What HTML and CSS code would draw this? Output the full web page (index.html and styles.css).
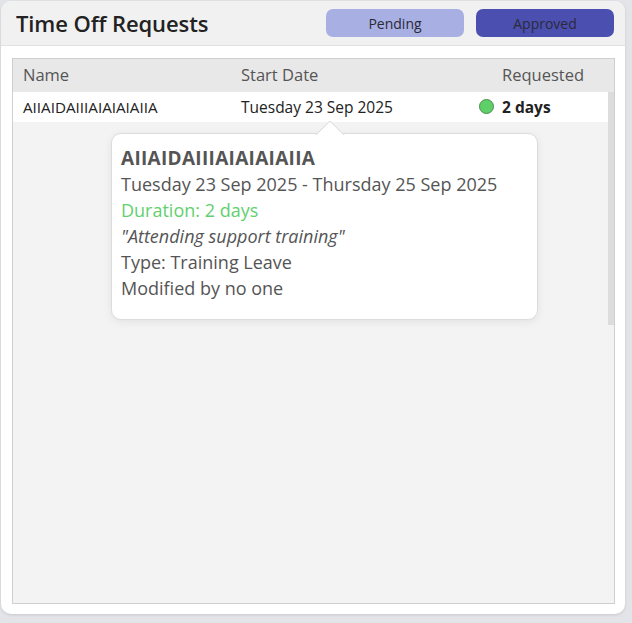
FILE: index.html
```html
<!DOCTYPE html>
<html>
<head>
<meta charset="utf-8">
<link rel="stylesheet" href="styles.css">
</head>
<body>
<div class="card">
  <div class="header">
    <h1 class="title">Time Off Requests</h1>
    <div class="filters">
      <button class="btn btn-pending">Pending</button>
      <button class="btn btn-approved">Approved</button>
    </div>
  </div>
  <div class="table">
    <div class="thead">
      <div class="col col-name">Name</div>
      <div class="col col-start">Start Date</div>
      <div class="col col-req">Requested</div>
    </div>
    <div class="tbody">
      <div class="rows">
        <div class="row">
          <div class="col col-name">AIIAIDAIIIAIAIAIAIIA</div>
          <div class="col col-start">Tuesday 23 Sep 2025</div>
          <div class="col col-req"><span class="dot"></span><b>2 days</b></div>
        </div>
      </div>
      <div class="scroll"><div class="thumb"></div></div>
    </div>
    <div class="tooltip">
      <div class="arrow"></div>
      <div class="tt-name">AIIAIDAIIIAIAIAIAIIA</div>
      <div class="tt-line">Tuesday 23 Sep 2025 - Thursday 25 Sep 2025</div>
      <div class="tt-line tt-green">Duration: 2 days</div>
      <div class="tt-line tt-italic">"Attending support training"</div>
      <div class="tt-line">Type: Training Leave</div>
      <div class="tt-line">Modified by no one</div>
    </div>
  </div>
</div>
</body>
</html>
```

FILE: styles.css
```css
* { box-sizing: border-box; }
html, body { margin: 0; padding: 0; }
body {
  background: #e3e4e8;
  font-family: "Open Sans", "Noto Sans", sans-serif;
  width: 632px;
  height: 623px;
  overflow: hidden;
}
.card {
  margin: 1px 0 0 1px;
  width: 624px;
  height: 613px;
  background: #fff;
  border-radius: 10px;
  box-shadow: 0 1px 3px rgba(0,0,0,0.12);
  display: flex;
  flex-direction: column;
}
.header {
  height: 45px;
  background: #f1f1f1;
  border-bottom: 1px solid #e2e2e2;
  border-radius: 10px 10px 0 0;
  display: flex;
  align-items: center;
  justify-content: space-between;
  padding: 0 11px 1px 15px;
}
.title {
  margin: 0;
  font-size: 22px;
  font-weight: 600;
  color: #222;
  letter-spacing: -0.1px;
}
.filters { display: flex; gap: 12px; }
.btn {
  width: 138px;
  height: 28px;
  border: none;
  border-radius: 7px;
  font-family: inherit;
  font-size: 14px;
  color: #2a2a3a;
  padding: 2px 0 0 0;
}
.btn-pending { background: #a8afe2; }
.btn-approved { background: #4a4fb0; }
.table {
  position: relative;
  margin: 12px 10px 0 11px;
  height: 546px;
  border: 1px solid #cfcfcf;
  background: #f3f3f3;
  display: flex;
  flex-direction: column;
}
.thead {
  height: 33px;
  background: #e8e8e8;
  display: flex;
  align-items: center;
  font-size: 16.5px;
  color: #555;
  padding-bottom: 2px;
}
.col-name { width: 218px; padding-left: 10px; }
.col-start { width: 261px; padding-left: 10px; }
.col-req { padding-left: 10px; display: flex; align-items: center; }
.tbody { display: flex; flex: 1; }
.rows { flex: 1; }
.row {
  height: 30px;
  background: #fff;
  display: flex;
  align-items: center;
  font-size: 15.2px;
  color: #222;
  padding-bottom: 1px;
}
.row .col-start { font-size: 15.5px; }
.row .col-req { margin-left: -23px; }
.row b { font-weight: 700; font-size: 15.5px; }
.dot {
  width: 15px;
  height: 15px;
  border-radius: 50%;
  background: #5fcf68;
  border: 1.5px solid #4d8a52;
  margin-right: 8px;
}
.scroll { width: 6px; }
.thumb { height: 233px; background: #dcdcdc; }
.tooltip {
  position: absolute;
  left: 98px;
  top: 74px;
  width: 427px;
  height: 187px;
  background: #fff;
  border: 1px solid #dcdcdc;
  border-radius: 10px;
  box-shadow: 0 2px 8px rgba(0,0,0,0.07);
  padding: 11px 9px;
  color: #555;
}
.arrow {
  position: absolute;
  left: 199px;
  top: -13px;
  width: 38px;
  height: 14px;
  overflow: hidden;
}
.arrow::before {
  content: "";
  position: absolute;
  left: 5px;
  top: 5px;
  width: 26px;
  height: 26px;
  background: #fff;
  border: 1px solid #dcdcdc;
  transform: rotate(45deg);
}
.tt-name {
  font-size: 19px;
  font-weight: 700;
  line-height: 26px;
  letter-spacing: 0.3px;
}
.tt-line {
  font-size: 18px;
  line-height: 26px;
}
.tt-green { color: #62d06e; }
.tt-italic { font-style: italic; }
```
